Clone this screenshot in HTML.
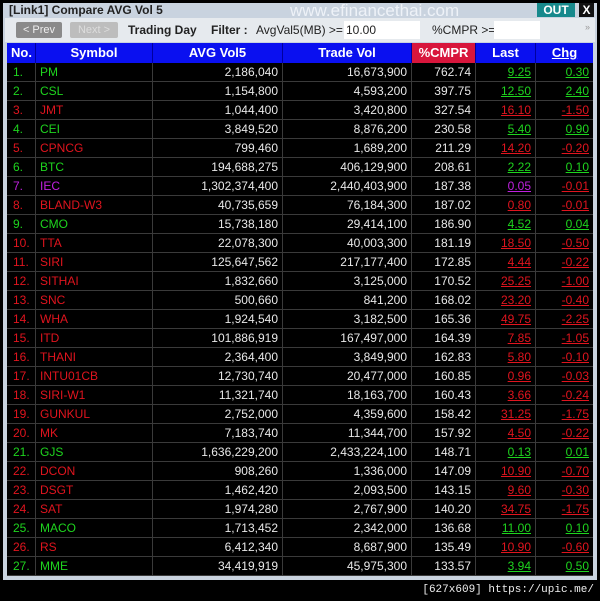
<!DOCTYPE html><html><head><meta charset="utf-8"><style>
body{margin:0;width:600px;height:601px;background:#000;position:relative;overflow:hidden;font-family:"Liberation Sans",sans-serif}
.a{position:absolute}
#win{left:3px;top:3px;width:594px;height:577px;background:#c9d3df}
.tb{left:5px;top:18px;width:590px;height:24px;background:#e6eaee}
.c{position:absolute;top:0;height:19px;line-height:19px;font-size:12px;border-right:1px solid #3a3a3a;box-sizing:border-box;padding:0 4px;white-space:nowrap}
.row{position:absolute;left:7px;width:586px;height:19px;border-bottom:1px solid #3a3a3a;box-sizing:border-box;background:#000}
.h .c{font-weight:bold;font-size:13px;color:#fff;text-align:center;border-right:1px solid #0000a0;height:20px;line-height:20px}
.r{text-align:right}.w{color:#e8e8e8}
.u{text-decoration:underline}
.g{color:#1ed41e}.rd{color:#e0141e}.m{color:#c020e0}
</style></head><body>
<div id="win" class="a"></div>
<div class="a" style="left:9px;top:3px;font-size:12px;font-weight:bold;color:#222;line-height:15px">[Link1] Compare AVG Vol 5</div>
<div class="a" style="left:290px;top:2px;font-size:17px;color:#eef2f8;line-height:18px">www.efinancethai.com</div>
<div class="a" style="left:537px;top:3px;width:38px;height:14px;background:#17898c;color:#fff;font-size:12px;font-weight:bold;text-align:center;line-height:14px">OUT</div>
<div class="a" style="left:579px;top:3px;width:15px;height:14px;background:#111;color:#fff;font-size:12px;font-weight:bold;text-align:center;line-height:14px">X</div>
<div class="a tb"></div>
<div class="a" style="left:16px;top:22px;width:46px;height:16px;background:#8a8a8a;border-radius:2px;color:#eee;font-size:11px;line-height:16px;text-align:center">&lt; Prev</div>
<div class="a" style="left:70px;top:22px;width:48px;height:16px;background:#bdbdbd;border-radius:2px;color:#ddd;font-size:11px;line-height:16px;text-align:center">Next &gt;</div>
<div class="a" style="left:128px;top:22px;font-size:12px;font-weight:bold;line-height:16px;color:#222">Trading Day</div>
<div class="a" style="left:211px;top:22px;font-size:12px;font-weight:bold;line-height:16px;color:#222">Filter :</div>
<div class="a" style="left:256px;top:22px;font-size:12px;line-height:16px;color:#222">AvgVal5(MB) &gt;=</div>
<div class="a" style="left:344px;top:21px;width:76px;height:18px;background:#fff;font-size:12px;line-height:18px;color:#222;padding-left:2px;box-sizing:border-box">10.00</div>
<div class="a" style="left:432px;top:22px;font-size:12px;line-height:16px;color:#222">%CMPR &gt;=</div>
<div class="a" style="left:494px;top:21px;width:46px;height:18px;background:#fff"></div>
<div class="a" style="left:585px;top:22px;font-size:9px;color:#999">»</div>
<div class="row h" style="top:43px;height:20px;background:#0a10f0;border:0">
<div class="c" style="left:0;width:29px">No.</div><div class="c" style="left:29px;width:117px">Symbol</div><div class="c" style="left:146px;width:130px">AVG Vol5</div><div class="c" style="left:276px;width:129px">Trade Vol</div><div class="c" style="left:405px;width:64px;background:#d8163c">%CMPR</div><div class="c" style="left:469px;width:60px">Last</div><div class="c u" style="left:529px;width:57px;border:0">Chg</div></div>
<div id="rows"></div>
<div class="a" style="right:6px;top:584px;font-size:11px;color:#eee;font-family:'Liberation Mono',monospace;white-space:nowrap">[627x609]&nbsp;https://upic.me/</div>
<script>
var d=[["PM","2,186,040","16,673,900","762.74","9.25","0.30","g","g"],["CSL","1,154,800","4,593,200","397.75","12.50","2.40","g","g"],["JMT","1,044,400","3,420,800","327.54","16.10","-1.50","rd","rd"],["CEI","3,849,520","8,876,200","230.58","5.40","0.90","g","g"],["CPNCG","799,460","1,689,200","211.29","14.20","-0.20","rd","rd"],["BTC","194,688,275","406,129,900","208.61","2.22","0.10","g","g"],["IEC","1,302,374,400","2,440,403,900","187.38","0.05","-0.01","m","rd"],["BLAND-W3","40,735,659","76,184,300","187.02","0.80","-0.01","rd","rd"],["CMO","15,738,180","29,414,100","186.90","4.52","0.04","g","g"],["TTA","22,078,300","40,003,300","181.19","18.50","-0.50","rd","rd"],["SIRI","125,647,562","217,177,400","172.85","4.44","-0.22","rd","rd"],["SITHAI","1,832,660","3,125,000","170.52","25.25","-1.00","rd","rd"],["SNC","500,660","841,200","168.02","23.20","-0.40","rd","rd"],["WHA","1,924,540","3,182,500","165.36","49.75","-2.25","rd","rd"],["ITD","101,886,919","167,497,000","164.39","7.85","-1.05","rd","rd"],["THANI","2,364,400","3,849,900","162.83","5.80","-0.10","rd","rd"],["INTU01CB","12,730,740","20,477,000","160.85","0.96","-0.03","rd","rd"],["SIRI-W1","11,321,740","18,163,700","160.43","3.66","-0.24","rd","rd"],["GUNKUL","2,752,000","4,359,600","158.42","31.25","-1.75","rd","rd"],["MK","7,183,740","11,344,700","157.92","4.50","-0.22","rd","rd"],["GJS","1,636,229,200","2,433,224,100","148.71","0.13","0.01","g","g"],["DCON","908,260","1,336,000","147.09","10.90","-0.70","rd","rd"],["DSGT","1,462,420","2,093,500","143.15","9.60","-0.30","rd","rd"],["SAT","1,974,280","2,767,900","140.20","34.75","-1.75","rd","rd"],["MACO","1,713,452","2,342,000","136.68","11.00","0.10","g","g"],["RS","6,412,340","8,687,900","135.49","10.90","-0.60","rd","rd"],["MME","34,419,919","45,975,300","133.57","3.94","0.50","g","g"]];
var h="";d.forEach(function(r,i){var t=63+i*19;h+='<div class="row" style="top:'+t+'px"><div class="c '+r[6]+'" style="left:0;width:29px;padding-left:6px">'+(i+1)+'.</div><div class="c '+r[6]+'" style="left:29px;width:117px">'+r[0]+'</div><div class="c r w" style="left:146px;width:130px">'+r[1]+'</div><div class="c r w" style="left:276px;width:129px">'+r[2]+'</div><div class="c r w" style="left:405px;width:64px">'+r[3]+'</div><div class="c r" style="left:469px;width:60px"><span class="u '+r[6]+'">'+r[4]+'</span></div><div class="c r" style="left:529px;width:57px;border:0"><span class="u '+r[7]+'">'+r[5]+'</span></div></div>';});
document.getElementById("rows").innerHTML=h;
</script></body></html>
